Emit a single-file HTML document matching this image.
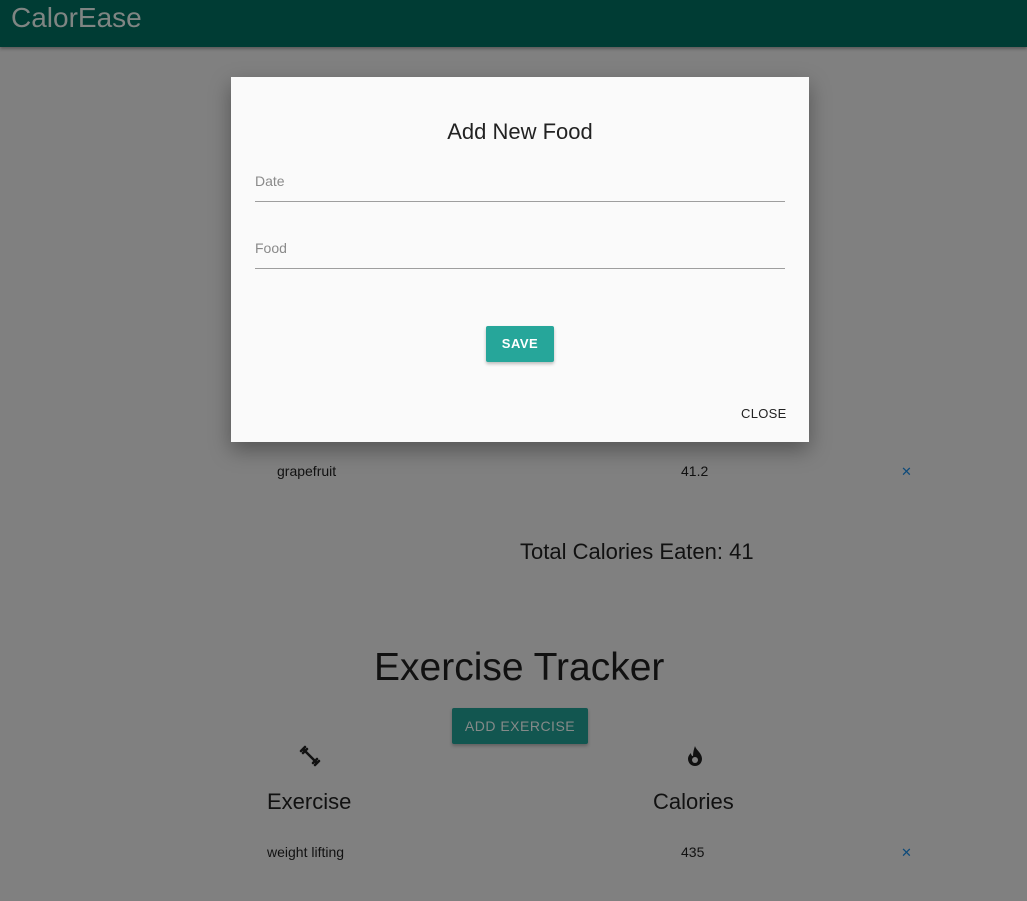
<!DOCTYPE html>
<html><head><meta charset="utf-8"><style>
html,body{margin:0;padding:0;width:1027px;height:901px;overflow:hidden;background:#808080;font-family:"Liberation Sans",sans-serif;position:relative}
.nav{position:absolute;left:0;top:0;width:1027px;height:47px;background:#003c34;box-shadow:0 2px 3px rgba(0,0,0,.3)}
.nav span{position:absolute;left:11px;top:2px;font-size:28px;color:#7f8583}
.t{position:absolute;color:#111;white-space:nowrap}
.x{position:absolute;color:#0d4a7a;font-size:13px}
.btn{position:absolute;left:452px;top:708px;width:136px;height:36px;background:#125650;color:#858a89;font-size:14px;letter-spacing:.5px;text-align:center;line-height:36px;border-radius:2px;box-shadow:0 2px 3px rgba(0,0,0,.25)}
.modal{position:absolute;left:231px;top:77px;width:578px;height:365px;background:#fafafa;box-shadow:0 8px 20px rgba(0,0,0,.35)}
.modal .h{position:absolute;left:0;width:578px;top:42px;text-align:center;font-size:22px;color:#222}
.lbl{position:absolute;left:24px;font-size:14px;color:#8a8a8a}
.line{position:absolute;left:24px;width:530px;height:1px;background:#9e9e9e}
.save{position:absolute;left:255px;top:249px;width:68px;height:36px;background:#26a69a;color:#fff;font-size:13px;font-weight:bold;letter-spacing:.5px;text-align:center;line-height:36px;border-radius:2px;box-shadow:0 2px 3px rgba(0,0,0,.25)}
.close{position:absolute;left:510px;top:329px;font-size:13px;color:#222;letter-spacing:.3px}
</style></head><body>
<div class="nav"><span>CalorEase</span></div>
<div class="t" style="left:277px;top:463px;font-size:14px">grapefruit</div>
<div class="t" style="left:681px;top:463px;font-size:14px">41.2</div>
<div class="x" style="left:901px;top:464px">✕</div>
<div class="t" style="left:520px;top:539px;font-size:22px">Total Calories Eaten: 41</div>
<div class="t" style="left:374px;top:646px;font-size:39px">Exercise Tracker</div>
<div class="btn">ADD EXERCISE</div>
<svg style="position:absolute;left:299px;top:745px" width="22" height="22" viewBox="0 0 22 22"><g stroke="#111" stroke-width="2.5" fill="none" stroke-linecap="round"><path d="M5 5L17 17"/><path d="M2 6L6 2M4 8L8 4M14 18L18 14M16 20L20 16"/></g></svg>
<svg style="position:absolute;left:686px;top:745px" width="18" height="22" viewBox="0 0 18 22"><path d="M9 1C10 5 16 8 16 14a7 7 0 0 1-14 0c0-3 2-5 3-6 0 2 1 3 2 3C7 7 8 4 9 1z" fill="#111"/><circle cx="9" cy="15" r="3" fill="#808080"/></svg>
<div class="t" style="left:267px;top:789px;font-size:22px">Exercise</div>
<div class="t" style="left:653px;top:789px;font-size:22px">Calories</div>
<div class="t" style="left:267px;top:844px;font-size:14px">weight lifting</div>
<div class="t" style="left:681px;top:844px;font-size:14px">435</div>
<div class="x" style="left:901px;top:845px">✕</div>
<div class="modal">
<div class="h">Add New Food</div>
<div class="lbl" style="top:96px">Date</div>
<div class="line" style="top:124px"></div>
<div class="lbl" style="top:163px">Food</div>
<div class="line" style="top:191px"></div>
<div class="save">SAVE</div>
<div class="close">CLOSE</div>
</div>
</body></html>
